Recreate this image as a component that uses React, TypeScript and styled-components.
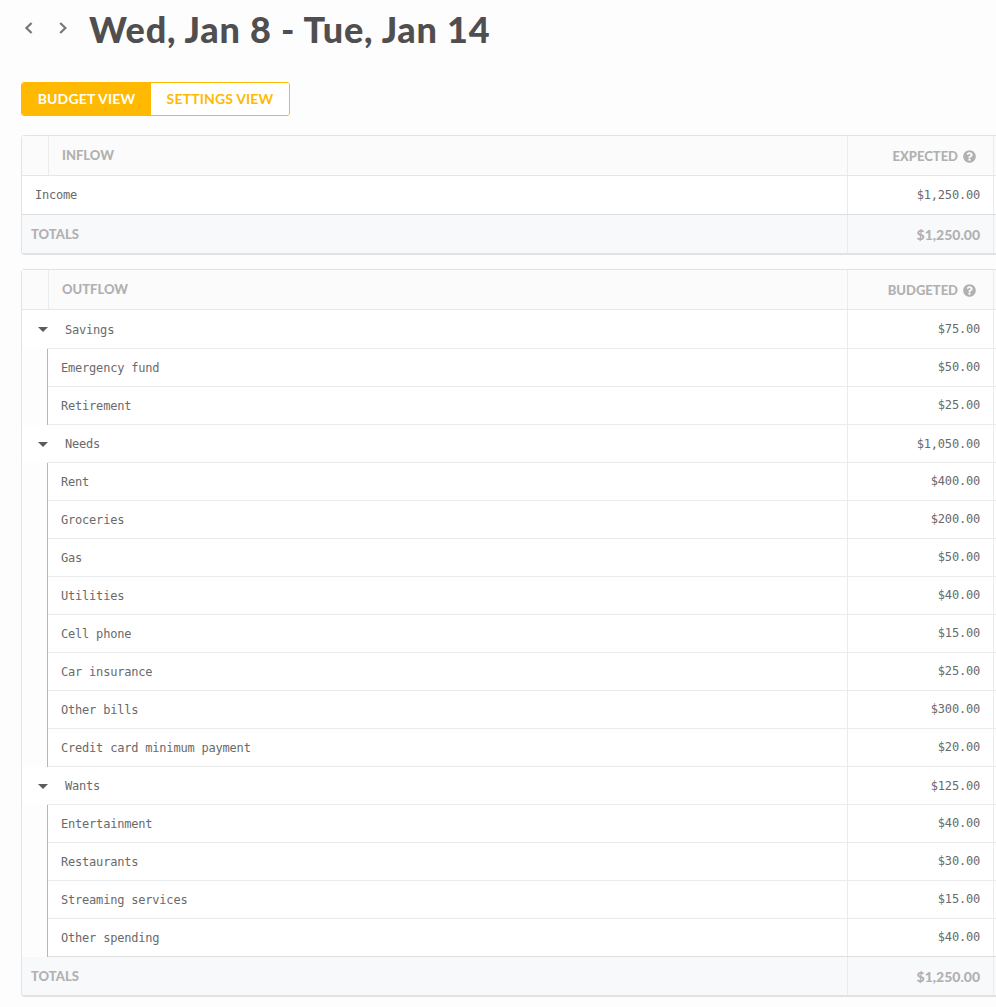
import React from 'react'
import styled, { createGlobalStyle } from 'styled-components'
import { FaQuestionCircle } from 'react-icons/fa'

const GlobalStyle = createGlobalStyle`
  html, body {
    margin: 0;
    padding: 0;
    background: #fdfdfd;
  }
  body {
    overflow: hidden;
    height: 1007px;
  }
`

const Page = styled.div`
  width: 996px;
  overflow: hidden;
  padding-left: 21px;
  box-sizing: border-box;
  font-family: 'Lato', sans-serif;
`

const TopBar = styled.div`
  display: flex;
  align-items: center;
  height: 60px;
`

const NavButton = styled.div`
  display: flex;
  width: 33px;
  height: 14px;
  margin-top: -4px;
  padding-left: 3px;
  box-sizing: border-box;
  color: #777;
`

const Title = styled.h1`
  margin: -2px 0 0 2px;
  font-size: 36px;
  line-height: 60px;
  font-weight: 900;
  letter-spacing: 0.78px;
  color: #504e4e;
`

const ViewSwitch = styled.div`
  display: flex;
  width: 269px;
  height: 34px;
  margin-top: 22px;
  box-sizing: border-box;
  border: 1px solid #ffb900;
  border-radius: 3px;
  background: #fff;
  overflow: hidden;
`

const ViewTab = styled.div<{ $active?: boolean }>`
  display: flex;
  align-items: center;
  justify-content: center;
  padding-bottom: 1px;
  box-sizing: border-box;
  flex: ${p => (p.$active ? '0 0 129px' : '1')};
  font-size: 14px;
  font-weight: 700;
  letter-spacing: 0.15px;
  color: ${p => (p.$active ? '#fff' : '#ffb900')};
  background: ${p => (p.$active ? '#ffb900' : '#fff')};
`

const Table = styled.div`
  width: 975px;
  margin-top: 14px;
  box-sizing: border-box;
  border: 1px solid #e2e2e2;
  border-bottom-width: 2px;
  border-right: 0;
  border-radius: 4px 0 0 4px;
  background: #fff;
`

const FirstTable = styled(Table)`
  margin-top: 19px;
`

const HeaderRow = styled.div`
  display: flex;
  height: 40px;
  box-sizing: border-box;
  background: #fbfbfb;
  border-bottom: 1px solid #e6e6e6;

  &::after {
    content: '';
    width: 2px;
  }
`

const HeaderSpacer = styled.div`
  width: 26px;
  border-right: 1px solid #ebebeb;
`

const HeaderTitle = styled.div`
  flex: 1;
  display: flex;
  align-items: center;
  padding-left: 13px;
  padding-bottom: 2px;
  font-size: 13px;
  font-weight: 900;
  color: #b1b1b1;
`

const AmountHeader = styled.div`
  width: 147px;
  display: flex;
  align-items: center;
  justify-content: flex-end;
  gap: 5px;
  padding-right: 18px;
  padding-top: 1px;
  box-sizing: border-box;
  border-left: 1px solid #ebebeb;
  border-right: 1px solid #ebebeb;
  font-size: 13px;
  font-weight: 900;
  color: #b1b1b1;
`

const Row = styled.div<{ $height?: number; $flush?: boolean }>`
  display: flex;
  height: ${p => p.$height ?? 38}px;
  box-sizing: border-box;
  border-bottom: ${p => (p.$flush ? '0' : '1px solid #ebebeb')};
  font-family: 'DejaVu Sans Mono', monospace;
  font-size: 12px;
  letter-spacing: -0.2px;
  color: #6a6a6a;

  &::after {
    content: '';
    width: 2px;
  }
`

const RowLabel = styled.div<{ $indent: number; $lead?: boolean }>`
  flex: 1;
  display: flex;
  align-items: center;
  padding-left: ${p => p.$indent}px;
  padding-top: ${p => (p.$lead ? 2 : 0)}px;
`

const ChildRail = styled.div`
  width: 26px;
  flex: none;
  align-self: stretch;
  margin-bottom: -1px;
  box-sizing: border-box;
  background: #fdfdfd;
  border-right: 1px solid #f0b429;
`

const CaretCell = styled.div`
  width: 25px;
  flex: none;
  display: flex;
  align-items: center;
  align-self: stretch;
  margin-bottom: -1px;
  background: #fff;
`

const Caret = styled.span`
  width: 0;
  height: 0;
  margin-left: 16px;
  border-left: 5px solid transparent;
  border-right: 5px solid transparent;
  border-top: 5px solid #5c5c5c;
`

const Amount = styled.div<{ $raised?: boolean }>`
  width: 147px;
  display: flex;
  align-items: center;
  justify-content: flex-end;
  padding-right: 13px;
  padding-bottom: ${p => (p.$raised ? 2 : 0)}px;
  box-sizing: border-box;
  border-left: 1px solid #ebebeb;
  border-right: 1px solid #ebebeb;
`

const TotalsRow = styled.div`
  display: flex;
  height: 39px;
  box-sizing: border-box;
  border-top: 1px solid #dedede;
  background: #f8f9fb;
  font-size: 13px;
  font-weight: 900;
  color: #b1b1b1;

  &::after {
    content: '';
    width: 2px;
  }
`

const TotalsLabel = styled.div`
  flex: 1;
  display: flex;
  align-items: center;
  padding-left: 9px;
`

const TotalsAmount = styled(Amount)`
  font-family: 'Lato', sans-serif;
  font-size: 14px;
`

const HelpIcon = styled(FaQuestionCircle)`
  width: 13px;
  height: 13px;
  margin-right: -1px;
  color: #b1b1b1;
`

const Chevron = ({ dir }: { dir: 'left' | 'right' }) => (
  <svg width="12" height="14" viewBox="0 0 12 14" fill="none" stroke="currentColor" strokeWidth="2.2">
    <path d={dir === 'left' ? 'M7.6 2 2.4 7l5.2 5' : 'M3.2 2l5.2 5-5.2 5'} />
  </svg>
)

type Item = { name: string; amount: string }
type Group = { name: string; amount: string; items: Item[] }

const groups: Group[] = [
  {
    name: 'Savings',
    amount: '$75.00',
    items: [
      { name: 'Emergency fund', amount: '$50.00' },
      { name: 'Retirement', amount: '$25.00' },
    ],
  },
  {
    name: 'Needs',
    amount: '$1,050.00',
    items: [
      { name: 'Rent', amount: '$400.00' },
      { name: 'Groceries', amount: '$200.00' },
      { name: 'Gas', amount: '$50.00' },
      { name: 'Utilities', amount: '$40.00' },
      { name: 'Cell phone', amount: '$15.00' },
      { name: 'Car insurance', amount: '$25.00' },
      { name: 'Other bills', amount: '$300.00' },
      { name: 'Credit card minimum payment', amount: '$20.00' },
    ],
  },
  {
    name: 'Wants',
    amount: '$125.00',
    items: [
      { name: 'Entertainment', amount: '$40.00' },
      { name: 'Restaurants', amount: '$30.00' },
      { name: 'Streaming services', amount: '$15.00' },
      { name: 'Other spending', amount: '$40.00' },
    ],
  },
]

export default function App() {
  return (
    <Page>
      <GlobalStyle />
      <TopBar>
        <NavButton><Chevron dir="left" /></NavButton>
        <NavButton><Chevron dir="right" /></NavButton>
        <Title>Wed, Jan 8 - Tue, Jan 14</Title>
      </TopBar>

      <ViewSwitch>
        <ViewTab $active>BUDGET VIEW</ViewTab>
        <ViewTab>SETTINGS VIEW</ViewTab>
      </ViewSwitch>

      <FirstTable>
        <HeaderRow>
          <HeaderSpacer />
          <HeaderTitle>INFLOW</HeaderTitle>
          <AmountHeader>EXPECTED <HelpIcon /></AmountHeader>
        </HeaderRow>
        <Row $flush>
          <RowLabel $indent={13}>Income</RowLabel>
          <Amount>$1,250.00</Amount>
        </Row>
        <TotalsRow>
          <TotalsLabel>TOTALS</TotalsLabel>
          <TotalsAmount>$1,250.00</TotalsAmount>
        </TotalsRow>
      </FirstTable>

      <Table>
        <HeaderRow>
          <HeaderSpacer />
          <HeaderTitle>OUTFLOW</HeaderTitle>
          <AmountHeader>BUDGETED <HelpIcon /></AmountHeader>
        </HeaderRow>
        {groups.map((group, groupIndex) => (
          <React.Fragment key={group.name}>
            <Row $height={groupIndex === 0 ? 39 : 38}>
              <CaretCell><Caret /></CaretCell>
              <RowLabel $indent={18} $lead={groupIndex === 0}>{group.name}</RowLabel>
              <Amount>{group.amount}</Amount>
            </Row>
            {group.items.map((item, itemIndex) => {
              const isLast = groupIndex === groups.length - 1 && itemIndex === group.items.length - 1
              return (
                <Row key={item.name} $flush={isLast} $height={isLast ? 37 : 38}>
                  <ChildRail />
                  <RowLabel $indent={13}>{item.name}</RowLabel>
                  <Amount $raised>{item.amount}</Amount>
                </Row>
              )
            })}
          </React.Fragment>
        ))}
        <TotalsRow>
          <TotalsLabel>TOTALS</TotalsLabel>
          <TotalsAmount>$1,250.00</TotalsAmount>
        </TotalsRow>
      </Table>
    </Page>
  )
}
